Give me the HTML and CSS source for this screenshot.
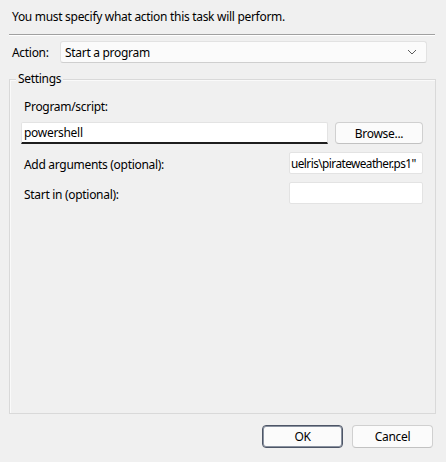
FILE: index.html
```html
<!DOCTYPE html>
<html>
<head>
<meta charset="utf-8">
<link rel="stylesheet" href="styles.css">
</head>
<body>
<div class="dialog">
  <div class="header">You must specify what action this task will perform.</div>
  <div class="sep"></div>
  <div class="action-row">
    <span class="action-label">Action:</span>
    <div class="dropdown">
      <span>Start a program</span>
      <svg class="chev" width="10" height="6" viewBox="0 0 10 6"><path d="M1 1 L5 5 L9 1" fill="none" stroke="#5c5c5c" stroke-width="1"/></svg>
    </div>
  </div>
  <div class="group">
    <span class="legend">Settings</span>
    <div class="label prog-label">Program/script:</div>
    <div class="prog-row">
      <div class="textbox focused">powershell</div>
      <div class="button browse">Browse...</div>
    </div>
    <div class="field-row args">
      <span class="label">Add arguments (optional):</span>
      <div class="textbox small scrolled"><span class="arg-text">uelris\pirateweather.ps1"</span></div>
    </div>
    <div class="field-row start">
      <span class="label">Start in (optional):</span>
      <div class="textbox small"></div>
    </div>
  </div>
  <div class="buttons">
    <div class="button ok">OK</div>
    <div class="button cancel">Cancel</div>
  </div>
</div>
</body>
</html>
```
FILE: styles.css
```css
html, body {
  margin: 0;
  padding: 0;
  background: #f0f0f0;
}
body {
  font-family: "Noto Sans", "Open Sans", sans-serif;
  font-size: 12px;
  letter-spacing: -0.3px;
  color: #000;
  width: 446px;
  height: 462px;
  overflow: hidden;
}
.dialog {
  display: flex;
  flex-direction: column;
}
.header {
  padding: 8px 0 0 12px;
  height: 34px;
  line-height: 17px;
  box-sizing: border-box;
}
.sep {
  margin: 0 11px 0 9px;
  height: 1px;
  background: #a0a0a0;
  border-bottom: 1px solid #ffffff;
}
.action-row {
  display: flex;
  align-items: center;
  margin-top: 5px;
  padding-left: 12px;
}
.action-label {
  width: 48px;
  line-height: 16px;
  padding-top: 2px;
}
.dropdown {
  width: 367px;
  height: 22px;
  box-sizing: border-box;
  background: #fbfbfb;
  border: 1px solid #e2e2e2;
  border-bottom-color: #cfcfcf;
  border-radius: 3px;
  display: flex;
  align-items: center;
  justify-content: space-between;
  padding: 0 9px 0 4px;
}
.chev {
  display: block;
}
.group {
  position: relative;
  margin: 16px 10px 0 9px;
  height: 335px;
  box-sizing: border-box;
  border: 1px solid #d9d9d9;
  box-shadow: inset 1px 1px 0 #fafafa;
  padding: 19px 12px 0 11px;
  display: flex;
  flex-direction: column;
}
.legend {
  position: absolute;
  top: -9px;
  left: 6px;
  padding: 0 2px;
  background: #f0f0f0;
  line-height: 16px;
}
.label {
  line-height: 16px;
  padding-left: 3px;
}
.prog-label {
  height: 16px;
}
.prog-row {
  display: flex;
  margin-top: 7px;
  gap: 7px;
}
.textbox {
  height: 22px;
  box-sizing: border-box;
  background: #ffffff;
  border: 1px solid #e3e3e3;
  border-radius: 2px;
  padding: 0 3px 0 2px;
  display: flex;
  align-items: center;
  white-space: nowrap;
  overflow: hidden;
}
.textbox.focused {
  width: 307px;
  height: 22px;
  border-bottom: 2px solid #1e1e1e;
  border-radius: 2px 2px 0 0;
}
.button {
  height: 22px;
  box-sizing: border-box;
  background: #fbfbfb;
  border: 1px solid #d0d0d0;
  border-bottom-color: #c2c2c2;
  border-radius: 4px;
  display: flex;
  align-items: center;
  justify-content: center;
}
.browse {
  width: 88px;
}
.field-row {
  display: flex;
  align-items: center;
  justify-content: space-between;
  margin-top: 8px;
}
.field-row .label {
  padding-top: 4px;
}
.textbox.small {
  width: 134px;
}
.textbox.scrolled {
  justify-content: flex-start;
  padding: 0 1px;
}
.arg-text {
  font-size: 11.8px;
  letter-spacing: -0.55px;
}
.buttons {
  display: flex;
  justify-content: flex-end;
  gap: 9px;
  margin-top: 11px;
  padding-right: 13px;
}
.ok, .cancel {
  width: 81px;
  height: 23px;
}
.ok {
  border: 1px solid #4d5566;
  box-shadow: inset 0 0 0 1px #8a92a0;
}
```
